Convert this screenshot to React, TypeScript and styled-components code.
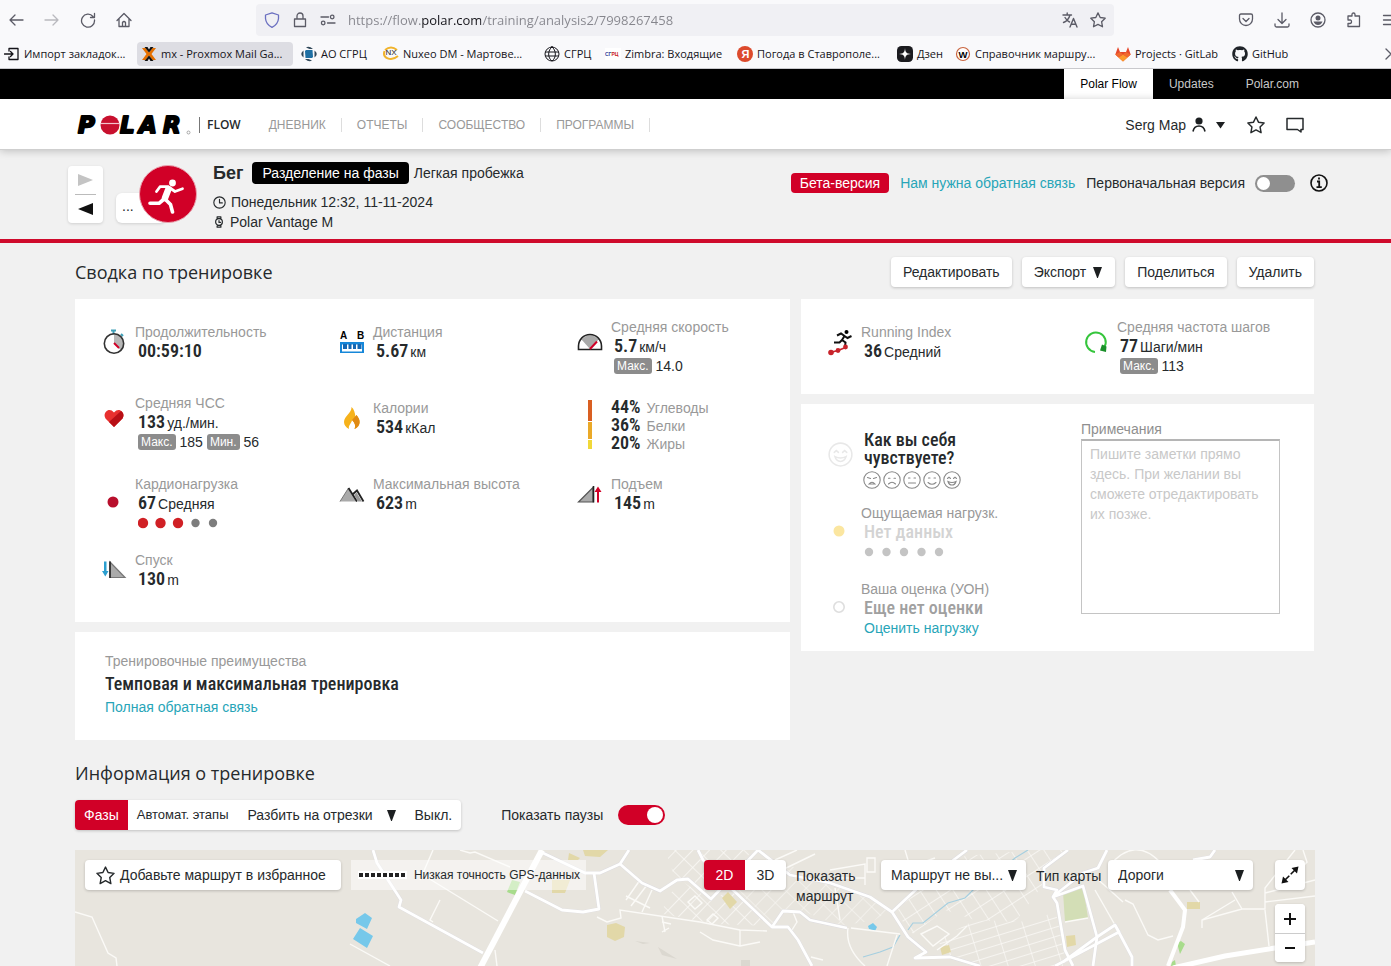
import React from "react";
import styled, { createGlobalStyle, css } from "styled-components";
import { FaGithub } from "react-icons/fa";

const GlobalStyle = createGlobalStyle`
  *, *::before, *::after { box-sizing: border-box; }
  html, body, #root { margin: 0; padding: 0; }
  body {
    background: #f1f1f1;
    color: #262a2c;
    font: 14px/20px "Liberation Sans", Arial, sans-serif;
  }
  button, input, select, textarea { font: inherit; color: inherit; }
  button { cursor: pointer; }
  a { color: #27a5b8; text-decoration: none; }
  svg { display: block; flex: none; }
`;

const red = "#d10027";
const uiFont = `"Open Sans", "Noto Sans", sans-serif`;
const condensed = `"Roboto Condensed", "Liberation Sans Narrow", Roboto, sans-serif`;

const Page = styled.div`
  display: flex;
  flex-direction: column;
  min-height: 100vh;
  overflow: hidden;
`;

/* ---------- browser window ---------- */

const Browser = styled.div`
  background: #f9f9fb;
  border-bottom: 1px solid #c9c9cd;
  color: #15141a;
  font-family: ${uiFont};
  overflow: hidden;
`;
const Toolbar = styled.div`
  display: flex;
  align-items: center;
  height: 40px;
`;
const ToolGroup = styled.div<{ $cut?: boolean }>`
  display: flex;
  gap: 4px;
  margin-right: ${(p) => (p.$cut ? "-15px" : "0")};
`;
const ToolButton = styled.button<{ $dim?: boolean }>`
  display: flex;
  align-items: center;
  justify-content: center;
  width: 32px;
  height: 32px;
  padding: 0;
  border: 0;
  background: none;
  color: ${(p) => (p.$dim ? "#b9b9be" : "#5b5b66")};
`;
const AddressBar = styled.div`
  display: flex;
  flex: 1;
  align-items: center;
  gap: 12px;
  height: 32px;
  margin: 0 116px;
  padding: 0 8px;
  border-radius: 4px;
  background: #f0f0f4;
  color: #5b5b66;
`;
const AddressInput = styled.input`
  flex: 1;
  min-width: 0;
  height: 28px;
  padding: 0;
  border: 0;
  outline: 0;
  font-size: 13px;
  color: transparent;
  background: linear-gradient(90deg, #85858c 73px, #15141a 73px 133px, #85858c 133px);
  background-clip: text;
  -webkit-background-clip: text;
`;
const BookmarksBar = styled.div`
  display: flex;
  align-items: center;
  gap: 4px;
  height: 28px;
  font-size: 11px;
`;
const Bookmark = styled.a<{ $width: number; $active?: boolean }>`
  display: flex;
  flex: 0 0 ${(p) => p.$width}px;
  align-items: center;
  gap: 4px;
  min-width: 0;
  height: 24px;
  padding: 0 4px;
  border-radius: 4px;
  background: ${(p) => (p.$active ? "#dddde3" : "transparent")};
  color: #15141a;
  white-space: nowrap;
`;
const More = styled.span`
  margin-left: auto;
  margin-right: -8px;
  color: #5b5b66;
`;

/* ---------- site header ---------- */

const SiteBar = styled.div`
  display: flex;
  justify-content: flex-end;
  padding: 0 76px;
  background: #000;
`;
const SiteTab = styled.a<{ $active?: boolean }>`
  padding: 0 16px;
  font-size: 12px;
  line-height: 30px;
  color: ${(p) => (p.$active ? "#000" : "#c9c9c9")};
  background: ${(p) => (p.$active ? "#fff" : "transparent")};
`;
const NavBar = styled.nav`
  position: relative;
  display: flex;
  align-items: center;
  height: 51px;
  padding: 1px 87px 0 76px;
  background: #fff;
  border-bottom: 1px solid #cfcfcf;
  box-shadow: 0 1px 8px rgba(0, 0, 0, 0.22);
`;
const LogoLink = styled.a`
  display: flex;
  align-items: center;
  color: #262a2c;
`;
const FlowWord = styled.span`
  margin-left: 8px;
  padding-left: 7px;
  border-left: 1px solid #777;
  font: 600 12px/16px ${uiFont};
`;
const NavItems = styled.div`
  display: flex;
  align-items: center;
  margin-left: 13px;
`;
const NavItem = styled.a`
  padding: 0 15px;
  border-right: 1px solid #ddd;
  font-size: 12px;
  line-height: 14px;
  color: #999;
`;
const UserArea = styled.div`
  display: flex;
  align-items: center;
  gap: 21px;
  margin-left: auto;
`;
const PlainButton = styled.button`
  display: flex;
  align-items: center;
  gap: 6px;
  padding: 0;
  border: 0;
  background: none;
`;

/* ---------- training header ---------- */

const TrainingHeader = styled.header`
  display: flex;
  align-items: flex-start;
  height: 93px;
  padding: 12px 62px 0 68px;
  border-bottom: 4px solid #cf0a2c;
`;
const Pager = styled.div`
  display: flex;
  flex-direction: column;
  width: 35px;
  margin-top: 4px;
  padding: 0 7px;
  border-radius: 4px;
  background: #fff;
  box-shadow: 0 1px 3px rgba(0, 0, 0, 0.14);
`;
const PagerButton = styled.button`
  display: flex;
  align-items: center;
  justify-content: center;
  height: 28px;
  padding: 0;
  border: 0;
  background: none;
  & + & { border-top: 1px solid #bbb; height: 29px; }
`;
const SportBadge = styled.div`
  display: flex;
  align-items: flex-end;
  margin: 3px 0 0 13px;
`;
const Dots = styled.button`
  width: 50px;
  height: 30px;
  margin-right: -27px;
  padding: 0 0 4px 6px;
  border: 0;
  border-radius: 6px;
  background: #fff;
  box-shadow: 0 1px 3px rgba(0, 0, 0, 0.14);
  text-align: left;
`;
const SportCircle = styled.div`
  z-index: 1;
  display: flex;
  align-items: center;
  justify-content: center;
  width: 58px;
  height: 58px;
  border: 1px solid #e9a3af;
  border-radius: 50%;
  background: ${red};
  color: #fff;
`;
const SessionInfo = styled.div`
  margin-left: 16px;
`;
const InfoLine = styled.div`
  display: flex;
  align-items: center;
  gap: 5px;
  height: 20px;
  white-space: nowrap;
`;
const TitleLine = styled(InfoLine)`
  height: 22px;
  margin-bottom: 8px;
`;
const Sport = styled.h1`
  margin: 0 4px 0 0;
  font-size: 18px;
  font-weight: 700;
  line-height: 20px;
`;
const PhaseTag = styled.span`
  padding: 0 10px;
  border-radius: 4px;
  background: #000;
  color: #fff;
  line-height: 22px;
`;
const VersionArea = styled.div`
  display: flex;
  align-items: center;
  gap: 11px;
  height: 20px;
  margin: 11px 0 0 auto;
  white-space: nowrap;
`;
const Beta = styled.span`
  padding: 0 9px;
  border-radius: 4px;
  background: ${red};
  color: #fff;
`;
const Switch = styled.input<{ $w: number; $h: number }>`
  position: relative;
  flex: none;
  appearance: none;
  width: ${(p) => p.$w}px;
  height: ${(p) => p.$h}px;
  margin: 0;
  border-radius: 12px;
  background: #8f8f8f;
  &::before {
    content: "";
    position: absolute;
    top: 2px;
    left: 2px;
    width: ${(p) => p.$h - 4}px;
    height: ${(p) => p.$h - 4}px;
    border-radius: 50%;
    background: #fff;
  }
  &:checked { background: ${red}; }
  &:checked::before { left: auto; right: 2px; }
`;
const SwitchLabel = styled.label<{ $gap: number }>`
  display: flex;
  align-items: center;
  gap: ${(p) => p.$gap}px;
`;
const InfoButton = styled(PlainButton)`
  margin-left: 3px;
`;

/* ---------- body ---------- */

const Main = styled.main`
  display: flex;
  flex: 1;
  flex-direction: column;
  padding: 14px 77px 0 75px;
`;
const HeadingRow = styled.div`
  display: flex;
  align-items: center;
  justify-content: space-between;
  height: 30px;
  margin-bottom: 12px;
`;
const Heading = styled.h2`
  margin: 0;
  font: 400 18px/24px ${uiFont};
`;
const Actions = styled.div`
  display: flex;
  gap: 10px;
`;
const raised = css`
  border: 0;
  border-radius: 4px;
  background: #fff;
  box-shadow: 0 1px 3px rgba(0, 0, 0, 0.2);
`;
const ActionButton = styled.button`
  ${raised}
  display: flex;
  align-items: center;
  gap: 6px;
  height: 30px;
  padding: 0 12px;
  white-space: nowrap;
`;
const Columns = styled.div`
  display: grid;
  grid-template-columns: 715fr 513fr;
  gap: 11px;
  align-items: start;
`;
const Column = styled.div`
  display: grid;
  gap: 10px;
`;
const Card = styled.section`
  background: #fff;
`;
const StatsCard = styled(Card)`
  display: grid;
  grid-template-columns: 238fr 238fr 215fr;
  grid-auto-rows: 76px;
  padding: 13px 0 6px 24px;
`;
const SideCard = styled(Card)`
  display: grid;
  grid-template-columns: 256fr 233fr;
  padding: 13px 0 6px 24px;
`;
const BenefitCard = styled(Card)`
  padding: 19px 30px 23px;
`;
const FeelingList = styled.div`
  display: grid;
  grid-auto-rows: 76px;
`;
const Stat = styled.div`
  display: flex;
  gap: 6px;
  height: 76px;
`;
const StatIcon = styled.div<{ $tall?: boolean }>`
  display: flex;
  flex: none;
  align-items: center;
  justify-content: center;
  width: 30px;
  height: ${(p) => (p.$tall ? 74 : 60)}px;
`;
const StatText = styled.div<{ $raised?: boolean }>`
  padding-top: ${(p) => (p.$raised ? 5 : 10)}px;
  white-space: nowrap;
`;
const StatLabel = styled.div`
  color: #999;
`;
const StatValue = styled.div<{ $color?: string }>`
  display: flex;
  align-items: baseline;
  gap: 2px;
  height: 19px;
  padding-left: 3px;
  line-height: 17px;
  color: ${(p) => p.$color || "inherit"};
`;
const Figure = styled.span`
  font-family: ${condensed};
  font-size: 18px;
  font-weight: 500;
`;
const Amount = styled(Figure)`
  font-weight: 600;
`;
const StatExtra = styled.div`
  display: flex;
  align-items: center;
  gap: 4px;
  height: 20px;
  padding-left: 3px;
`;
const Tag = styled.span`
  padding: 0 3px;
  border-radius: 3px;
  background: #8c8c8c;
  color: #fff;
  font-size: 12px;
  line-height: 16px;
`;
const Nutrient = styled.div`
  display: flex;
  align-items: baseline;
  gap: 6px;
  height: 18px;
  line-height: 18px;
  color: #999;
  ${Amount} { color: #262a2c; }
`;
const Question = styled.div`
  padding: 4px 0 4px 3px;
  font: 500 18px/18px ${condensed};
`;
const FaceRow = styled.div`
  display: flex;
  gap: 2px;
  padding-left: 2px;
`;
const FaceButton = styled.button`
  padding: 0;
  border: 0;
  background: none;
`;
const Notes = styled.div`
  width: 199px;
  padding-top: 2px;
`;
const NotesLabel = styled.label`
  display: block;
  color: #8f8f8f;
`;
const NotesBox = styled.textarea`
  display: block;
  width: 100%;
  height: 175px;
  padding: 3px 6px 3px 8px;
  border: 1px solid #c4c4c4;
  border-top: 2px solid #b5b5b5;
  background: #fff;
  line-height: 20px;
  resize: none;
  overflow: hidden;
  &::placeholder { color: #c8c8c8; opacity: 1; }
`;
const BenefitTitle = styled.div`
  font: 500 18px/26px ${condensed};
`;
const InfoHeading = styled(Heading)`
  margin: 21px 0 15px;
`;
const Controls = styled.div`
  display: flex;
  align-items: center;
  gap: 40px;
  margin-bottom: 20px;
`;
const Segments = styled.div`
  ${raised}
  display: flex;
  height: 30px;
  overflow: hidden;
`;
const Segment = styled.button<{ $active?: boolean; $small?: boolean }>`
  min-width: 41px;
  padding: 0 9px;
  border: 0;
  background: ${(p) => (p.$active ? red : "transparent")};
  color: ${(p) => (p.$active ? "#fff" : "inherit")};
  font-size: ${(p) => (p.$small ? 13 : 14)}px;
  white-space: nowrap;
`;
const Picker = styled.div<{ $w: number; $raised?: boolean }>`
  position: relative;
  display: flex;
  align-items: center;
  width: ${(p) => p.$w}px;
  height: 30px;
  ${(p) => p.$raised && raised}
  select {
    width: 100%;
    height: 30px;
    padding: 0 0 0 10px;
    border: 0;
    background: none;
    appearance: none;
  }
  svg { position: absolute; right: 9px; pointer-events: none; }
`;

/* ---------- map ---------- */

const MapArea = styled.section`
  position: relative;
  flex: 1;
  min-height: 116px;
  margin-right: -1px;
  overflow: hidden;
  background: #e8e5de;
`;
const MapCanvas = styled.svg`
  position: absolute;
  inset: 0;
  width: 100%;
  height: 100%;
`;
const MapControls = styled.div`
  position: relative;
  display: flex;
  align-items: flex-start;
  gap: 10px;
  padding: 10px 10px 0;
`;
const MapButton = styled.button`
  ${raised}
  display: flex;
  align-items: center;
  gap: 5px;
  height: 30px;
  padding: 0 15px 0 11px;
  white-space: nowrap;
`;
const Legend = styled.div`
  display: flex;
  align-items: center;
  gap: 7px;
  height: 30px;
  padding: 0 6px 0 7px;
  background: rgba(255, 255, 255, 0.5);
  font-size: 12px;
  white-space: nowrap;
`;
const MapRight = styled.div`
  display: flex;
  align-items: flex-start;
  gap: 10px;
  margin-left: auto;
`;
const MapLabel = styled.label<{ $w: number }>`
  width: ${(p) => p.$w}px;
  padding-top: 6px;
`;
const MapPair = styled.div`
  display: flex;
`;
const SquareButtons = styled.div`
  display: grid;
  gap: 14px;
  margin-left: 12px;
`;
const SquareButton = styled.button`
  ${raised}
  display: flex;
  align-items: center;
  justify-content: center;
  width: 30px;
  height: 30px;
  padding: 0;
`;
const ZoomBox = styled.div`
  ${raised}
  button { box-shadow: none; height: 29px; }
  button + button { border-top: 1px solid #ccc; border-radius: 0 0 4px 4px; }
`;

/* ---------- drawings ---------- */

const Line = ({ d, size = 16, w = 1.3, fill = "none", box = 16 }: { d: string; size?: number; w?: number; fill?: string; box?: number }) => (
  <svg width={size} height={size} viewBox={`0 0 ${box} ${box}`} fill={fill} stroke="currentColor" strokeWidth={w} strokeLinecap="round" strokeLinejoin="round">
    <path d={d} />
  </svg>
);

const starPath = "M8 .9 10.2 5.5 15.2 6.2 11.6 9.7 12.5 14.8 8 12.4 3.5 14.8 4.4 9.7.8 6.2 5.8 5.5Z";

const Caret = ({ w = 9, h = 11 }) => (
  <svg width={w} height={h} viewBox="0 0 9 11"><path d="M0 0H9L4.900 11H4.100Z" fill="#1c1f21" /></svg>
);

const Shield = () => (
  <svg width="16" height="16" viewBox="0 0 16 16" fill="none" stroke="#6a6fc0" strokeWidth="1.300" strokeLinejoin="round">
    <path d="M8 .8 14.500 3V6.500Q14 12.500 8 15.300 2 12.500 1.500 6.500V3Z" />
  </svg>
);

const Logo = () => (
  <svg width="115" height="34" viewBox="0 -6 115 34" fontFamily="DejaVu Sans" fontWeight="700" fontStyle="oblique" fontSize="23" stroke="#000" strokeWidth="2" strokeLinejoin="round">
    <text x="2" y="19">P</text>
    <text x="44" y="19">L</text>
    <text x="63" y="19">A</text>
    <text x="87" y="19">R</text>
    <circle cx="34" cy="11" r="9.500" fill="#c8102e" stroke="none" />
    <path d="M25 9.500H43.500" stroke="#f3c3cb" strokeWidth="1.200" />
    <circle cx="112.500" cy="18.500" r="1.500" fill="none" stroke="#888" strokeWidth=".7" />
  </svg>
);

const Runner = () => (
  <svg width="40" height="40" viewBox="0 0 40 40" fill="none" stroke="#fff" strokeLinecap="round" strokeLinejoin="round">
    <circle cx="24.500" cy="9" r="3.400" fill="#fff" stroke="none" />
    <path d="M20.500 15 17 24" strokeWidth="6.500" />
    <path d="M8.500 17.500 12 12.700H20M22 14 27 17.500 34.500 14.800" strokeWidth="2.800" />
    <path d="M17 25 22.500 30.500 24.500 38M15.500 25.500 11 29.300H2" strokeWidth="3.600" />
  </svg>
);

const faces = [
  "M4.500 6.500 7.500 7.500M10.500 7.500 13.500 6.500M6 13Q9 9.500 12 13Z",
  "M5.500 7.200h1.500M11 7.200h1.500M5.500 13Q9 9.500 12.500 13",
  "M5.500 7h1.500M11 7h1.500M5.500 12h7",
  "M5.500 7h1.500M11 7h1.500M5 11.500Q9 15 13 11.500",
  "M4.500 7.500 6 6.200 7.500 7.500M10.500 7.500 12 6.200 13.500 7.500M5 10.500Q9 12.500 13 10.500 12 14 9 14T5 10.500Z",
];
const Face = ({ i, size = 18, color = "#888" }: { i: number; size?: number; color?: string }) => (
  <svg width={size} height={size} viewBox="0 0 18 18" fill="none" stroke={color} strokeWidth="1.100" strokeLinecap="round">
    <circle cx="9" cy="9" r="8.200" />
    <path d={faces[i]} />
  </svg>
);

const Meter = ({ on, color, off }: { on: number; color: string; off: string }) => (
  <svg width="82" height="12" viewBox="0 0 82 12">
    {[0, 1, 2, 3, 4].map((i) => (
      <circle key={i} cx={5 + i * 17.5} cy="6" r={i < on ? 5.2 : 4.2} fill={i < on ? color : off} />
    ))}
  </svg>
);

const Stopwatch = () => (
  <svg width="26" height="28" viewBox="0 0 26 28">
    <path d="M10 2.500h5M12.500 2.500v4M20 6l2 2" stroke="#3f9fb8" strokeWidth="2" />
    <path d="M13 15.500V5.500a10 10 0 0 1 7 17Z" fill="#b7b7b7" />
    <circle cx="13" cy="15.500" r="9.700" fill="none" stroke="#333" strokeWidth="1.600" />
    <path d="M13 15 18 20" stroke={red} strokeWidth="2" />
  </svg>
);
const Distance = () => (
  <svg width="26" height="28" viewBox="0 0 26 28">
    <text x="1" y="11" fontFamily="Liberation Sans" fontWeight="700" fontSize="10">A</text>
    <text x="18" y="11" fontFamily="Liberation Sans" fontWeight="700" fontSize="10">B</text>
    <path d="M1 14H25V25H1Z" fill="#1687d9" />
    <path d="M3 16.500H23V23.500H3Z" fill="#fff" />
    <path d="M4 16h4v5H4ZM9.500 16h3v5h-3ZM14 16h3v5h-3ZM18.500 16h4v5h-4Z" fill="#1668b4" />
  </svg>
);
const Speed = () => (
  <svg width="26" height="18" viewBox="0 0 26 18">
    <path d="M13 16 4.500 6.500Q13-2 21.500 6.500Z" fill="#aaa" />
    <path d="M1.500 16.500V13A11.500 11.500 0 0 1 24.500 13V16.500Z" fill="none" stroke="#222" strokeWidth="1.600" />
    <path d="M13 16 20 8.500" stroke={red} strokeWidth="2" />
  </svg>
);
const Heart = () => (
  <svg width="20" height="20" viewBox="0 0 20 20">
    <path d="M10 19 1.500 10.500C-2 5 5-2 10 4.500 15-2 22 5 18.500 10.500Z" fill="#e8302f" />
    <path d="M18.500 10.500 10 19 5 14 17 3C20 5 20 8 18.500 10.500Z" fill="#b80f16" />
  </svg>
);
const Flame = () => (
  <svg width="18" height="24" viewBox="0 0 18 24">
    <path d="M8.500 1C9 7 1 10 1 16c0 3 2 5.500 5 7-1-4 3-6 3-9 3 3 4 6 2.500 9 3-1 5.500-4 5-8-.3-3-2-4-3-6l-1 2C12 7 11 3 8.500 1Z" fill="#f6b21b" />
    <path d="M13.500 9C18 14 18 20 11.500 23 13 20 12 17 9 14Z" fill="#e08a13" />
  </svg>
);
const Macro = () => (
  <svg width="6" height="50" viewBox="0 0 6 50">
    <path d="M1 0H5V21H1Z" fill="#d95f22" /><path d="M1 22H5V39H1Z" fill="#eaa928" /><path d="M1 40H5V49H1Z" fill="#f0d83a" />
  </svg>
);
const LowDot = ({ fill, stroke }: { fill: string; stroke?: string }) => (
  <svg width="28" height="32" viewBox="0 0 28 32"><circle cx="13" cy="24" r={stroke ? 5.2 : 5.5} fill={fill} stroke={stroke} strokeWidth="1.600" /></svg>
);
const Mountains = () => (
  <svg width="26" height="18" viewBox="0 0 26 18">
    <path d="M1 16.500 9.500 3 18 16.500Z" fill="#aaa" />
    <path d="M1 16.500 9.500 3" stroke="#777" />
    <path d="M9.500 3 18 16.500M14 9 18 5.500 24.500 16.500" fill="none" stroke="#222" strokeWidth="1.800" />
    <path d="M15 10 17.500 7.500 23 16.500H19Z" fill="#999" />
  </svg>
);
const Ascent = () => (
  <svg width="26" height="18" viewBox="0 0 26 18">
    <path d="M1.500 17 16 2.500V17Z" fill="#aaa" stroke="#555" strokeWidth="1.200" />
    <path d="M16.500 1V17.500" stroke="#222" strokeWidth="1.600" />
    <path d="M20 17.500V7H17.500L21 1.500 24.500 7H22V17.500Z" fill={red} />
  </svg>
);
const Descent = () => (
  <svg width="26" height="20" viewBox="0 0 26 20">
    <path d="M9 2 24 17.500H9Z" fill="#aaa" stroke="#777" strokeWidth="1.200" />
    <path d="M9 1.500V18" stroke="#222" strokeWidth="1.600" />
    <path d="M3 1.500H5.500V11H7.500L4.300 16.500 1 11H3Z" fill="#2c9fd0" />
  </svg>
);
const RunIndex = () => (
  <svg width="26" height="28" viewBox="0 0 26 28">
    <circle cx="19.500" cy="4" r="2" />
    <path d="M10 7.500 14 5.500 17.500 8 15 12 18.500 14.500 18 19M17.500 8 20.500 10 24.500 8M15 12 12.500 14.500H7" fill="none" stroke="#111" strokeWidth="2" />
    <path d="M3 24.500 11 22.500 18.500 19.500" fill="none" stroke="#c8232b" strokeWidth="1.800" />
    <circle cx="4" cy="24.500" r="2.800" fill="#c8232b" /><circle cx="11" cy="22.500" r="2.400" fill="#c8232b" /><circle cx="18.500" cy="19" r="2.400" fill="#c8232b" />
  </svg>
);
const Cadence = () => (
  <svg width="24" height="26" viewBox="0 0 24 26">
    <path d="M11 23A9.800 9.800 0 1 1 20.500 18" fill="none" stroke="#35c53c" strokeWidth="2" />
    <path d="M18 15.500 22.500 17.500 22 23 16 21.500Z" fill="#1a8f2a" />
  </svg>
);

const thickRoads = [
  "M298 0 302 13 326 50 324 57 408 103",
  "M468 3 510 23H525L545 14 554 0",
  "M519 23 524 59 508 62 487 60 450 41",
  "M545 14 567 33 585 41 602 30 613 29 636 49 683 0",
  "M623 0 628 10 658 40 697 77H713L723 90 737 116",
  "M697 77 708 61 725 62 735 70 772 78",
  "M683 0 715 25 755 33 795 47 817 62 833 87 851 102 840 108 875 107 905 116",
  "M817 62 848 33 892 0",
  "M993 0 969 18V37L982 40 978 47 982 53 990 100 998 116",
  "M1032 0 1023 18 1008 23 980 45M978 47 1008 36 1022 87 1018 116",
  "M988 112 1022 87 1040 75 1057 107V116M1040 75 1044 82 980 116",
  "M1140 0 1135 7 1118 10",
];
const thinRoads = [
  "M0 62 17 67 33 103 41 108 42 116M358 0 345 30M340 20 423 71M385 0 395 3 400 2 435 17",
  "M365 50 355 70 358 72M275 94 315 116M420 100 422 116",
  "M522 67 532 72 546 68 545 60 625 72 665 80 692 81M587 66 590 82M587 82 594 78M587 72 596 74",
  "M625 82 638 90 665 96 685 92M665 80V96M551 50 565 30M556 56 572 35M551 46 575 58M567 62 577 40",
  "M773 78Q770 98 790 116M776 78 825 84M822 85 812 116M736 107 748 110M760 38 765 70M718 62 722 72 717 80",
  "M1127 78V70L1167 59H1190V38L1220 0M1190 52 1240 46M1190 43 1240 30M1190 60 1194 96M1167 59 1157 42M1127 70 1160 50M1115 40 1124 52",
  "M1050 50 1058 54 1073 85 1083 90 1098 86M1020 40 1040 75M1018 25 1048 52M1035 15Q1060-14 1085 12M1085 12 1120 30M990 72 1013 68",
  "M1133 32 1166 12M1228 0 1232 12 1212 34M755 20 790 14V35M700 10 722 0M707 20 740 4M760 28H790M792 8h8v14h-8ZM810 10V34M830 0 836 20M820 22 860 8",
  "M846 84 862 76 874 84 858 96ZM862 100 882 86 892 76M613 52 620 46 627 53 620 59ZM632 70 638 64 643 68 637 74Z",
];

const RoadMap = () => (
  <MapCanvas viewBox="0 0 1240 116" preserveAspectRatio="xMidYMin slice" aria-hidden="true">
    <defs>
      <pattern id="blocks" width="16" height="12" patternUnits="userSpaceOnUse" patternTransform="rotate(-46)">
        <path d="M0 0H16M0 0V12" stroke="#fbfaf7" strokeWidth="1.400" fill="none" />
      </pattern>
      <pattern id="rows" width="26" height="9" patternUnits="userSpaceOnUse" patternTransform="rotate(-17)">
        <path d="M0 0H26M0 0V9" stroke="#fbfaf7" strokeWidth="1.400" fill="none" />
      </pattern>
      <pattern id="fine" width="14" height="15" patternUnits="userSpaceOnUse" patternTransform="rotate(-33)">
        <path d="M0 0H14M0 0V15" stroke="#fbfaf7" strokeWidth="1.400" fill="none" />
      </pattern>
    </defs>
    <path d="M590 0H678L636 47 613 28 600 28ZM590 48 608 32 636 50 656 40 694 76 640 74 588 64Z" fill="url(#blocks)" />
    <path d="M690 5 750 30 795 47 815 60 800 70 765 76 725 60 708 60 698 74 662 40Z" fill="url(#blocks)" opacity=".7" />
    <path d="M820 62 850 34 890 6 960 0 990 0 968 18 967 36 940 72 900 70 870 60 838 84Z" fill="url(#fine)" />
    <path d="M862 90 900 70 960 72 980 60 990 100 994 116 906 116 872 104Z" fill="url(#rows)" />
    <g fill="#e2d8a8">
      <path d="M532 75 541 73 550 77 549 87 540 91 532 87ZM508 0H533L525 7 510 6ZM494 3 505 8 503 10 493 10ZM477 30H495L490 43 477 43ZM647 48 653 42 662 52 655 59Z" />
      <path d="M1112 52h13v7h-13ZM991 86 1000 85 1001 95 992 97ZM865 97 874 95 876 102 867 105Z" />
    </g>
    <path d="M988 42 1008 36 1013 68 990 72Z" fill="#d3deb6" />
    <path d="M432 42 437 30 445 32 440 45ZM1102 93 1106 91 1110 94 1105 104ZM1097 112 1100 110 1101 116H1096Z" fill="#a8dc8c" />
    <path d="M560 91 575 93 568 94ZM583 97 602 109 587 105ZM666 110h9v6h-9Z" fill="#dbd8d0" />
    <path d="M281 69 290 63 297 68 292 79 281 73ZM285 78 298 86 292 98 278 89ZM793 76 798 73 802 77 800 81 794 79Z" fill="#76c8ea" />
    <path d="M953 0 940 8 920 26 898 40 890 48 873 53 848 73H838L833 80M825 85 818 97 805 102 788 107" fill="none" stroke="#a5cfe0" strokeWidth="1.200" />
    <g fill="none" stroke="#fbfaf7" strokeWidth="1.400">{thinRoads.map((d) => <path key={d} d={d} />)}</g>
    <g fill="none" stroke="#dddce0" strokeWidth="3.600" strokeLinejoin="round">{thickRoads.map((d) => <path key={d} d={d} />)}</g>
    <g fill="none" stroke="#fff" strokeWidth="2.800" strokeLinejoin="round">{thickRoads.map((d) => <path key={d} d={d} />)}</g>
    <g fill="none" stroke="#fff">
      <path d="M467 0 403 122" strokeWidth="6" />
      <path d="M1095 40 1110 60 1108 77 1093 116" strokeWidth="4" />
      <path d="M1098 118 1150 106 1200 98 1240 92" strokeWidth="5" />
    </g>
  </MapCanvas>
);

/* ---------- bookmarks ---------- */

const bookmarks: { text: string; width: number; active?: boolean; icon: React.ReactNode }[] = [
  { text: "Импорт закладок...", width: 133, icon: <Line d="M5 5V2.500H14V13.500H5V11M.5 8H9M6.500 5.500 9 8 6.500 10.500" /> },
  { text: "mx - Proxmox Mail Ga...", width: 156, active: true, icon: (
    <svg width="16" height="16" viewBox="0 0 16 16"><path d="M1 2H4.500L8 6.500 11.500 2H15L10.500 8 15 14H11.500L8 9.500 4.500 14H1L5.500 8Z" fill="#e57000" /><path d="M3.500 1H6.500L8 3.500 9.500 1H12.500L8 6.500ZM3.500 15H6.500L8 12.500 9.500 15H12.500L8 9.500Z" fill="#111" /></svg>) },
  { text: "АО СГРЦ", width: 78, icon: (
    <svg width="16" height="16" viewBox="0 0 16 16"><path d="M5 4H11.500L12 11 11 12H4.500L4 5Z" fill="#1e6fa3" /><path d="M5 1.500Q8-.5 12 3L8.500 3ZM13.500 4.500Q18 8 13.500 11.500V8ZM11 14.500Q8 16.500 4 13H7.500ZM2.500 11.500Q-2 8 2.500 4.500V8Z" fill="#31485a" /></svg>) },
  { text: "Nuxeo DM - Мартове...", width: 157, icon: (
    <svg width="16" height="16" viewBox="0 0 16 16"><path d="M1.500 5C-1 12 8 16 15 10M2 4Q8-1 14 4" fill="none" stroke="#f0b32c" strokeWidth="2" /><text x="2.500" y="9" fontFamily="Liberation Sans" fontSize="8" fill="#222">NX</text></svg>) },
  { text: "СГРЦ", width: 57, icon: <Line d="M8 1A7 7 0 1 1 8 15 7 7 0 1 1 8 1ZM8 1C3.500 4 3.500 12 8 15 12.500 12 12.500 4 8 1ZM1.500 6H14.500M1.500 10H14.500" w={1} /> },
  { text: "Zimbra: Входящие", width: 128, icon: (
    <svg width="16" height="16" viewBox="0 0 16 16"><path d="M0 2H16V14H0Z" fill="#fff" /><text x="0" y="10" fontFamily="Liberation Sans" fontWeight="700" fontSize="5" fill="#33419b">СГ<tspan fill="#c22">РЦ</tspan></text></svg>) },
  { text: "Погода в Ставрополе...", width: 156, icon: (
    <svg width="16" height="16" viewBox="0 0 16 16"><circle cx="8" cy="8" r="8" fill="#dc4a2c" /><text x="4.500" y="12" fontFamily="Liberation Sans" fontWeight="700" fontSize="11" fill="#fff">Я</text></svg>) },
  { text: "Дзен", width: 54, icon: (
    <svg width="16" height="16" viewBox="0 0 16 16"><rect width="16" height="16" rx="4.500" fill="#1b1b1f" /><path d="M8 2C8.300 6.500 9.500 7.700 14 8 9.500 8.300 8.300 9.500 8 14 7.700 9.500 6.500 8.300 2 8 6.500 7.700 7.700 6.500 8 2Z" fill="#fff" /></svg>) },
  { text: "Справочник маршру...", width: 156, icon: (
    <svg width="16" height="16" viewBox="0 0 16 16"><circle cx="8" cy="8" r="6.500" fill="#fff" stroke="#c9643f" strokeWidth="1.200" /><text x="3.500" y="11.500" fontFamily="Liberation Sans" fontWeight="700" fontSize="9.500">W</text></svg>) },
  { text: "Projects · GitLab", width: 113, icon: (
    <svg width="16" height="16" viewBox="0 0 16 16"><path d="M3 1 5 6H11L13 1 15.700 8.500 8 15.500.3 8.500Z" fill="#e5482c" /><path d="M8 15.500 3.500 11.500 8 8.500 12.500 11.500Z" fill="#fb9a2e" /><path d="M.3 8.500 5 6 8 8.500 3.500 11.500ZM15.700 8.500 11 6 8 8.500 12.500 11.500Z" fill="#f06a2f" /></svg>) },
  { text: "GitHub", width: 68, icon: <FaGithub size={16} color="#1f2328" /> },
];

const StatCell = ({ icon, label, value, unit, raisedText, children }: {
  icon: React.ReactNode; label: string; value: string; unit?: string; raisedText?: boolean; children?: React.ReactNode;
}) => (
  <Stat>
    <StatIcon>{icon}</StatIcon>
    <StatText $raised={raisedText}>
      <StatLabel>{label}</StatLabel>
      <StatValue><Amount>{value}</Amount>{unit && <span>{unit}</span>}</StatValue>
      {children && <StatExtra>{children}</StatExtra>}
    </StatText>
  </Stat>
);

export default function App() {
  return (
    <Page>
      <GlobalStyle />
      <Browser>
        <Toolbar>
          <ToolGroup>
            <ToolButton aria-label="Назад"><Line d="M7 3 2 8 7 13M2 8H15" /></ToolButton>
            <ToolButton aria-label="Вперёд" $dim><Line d="M9 3 14 8 9 13M14 8H1" /></ToolButton>
            <ToolButton aria-label="Обновить"><Line d="M13 4.500A6.500 6.500 0 1 0 14.500 8M14.500 1.500V5.500H10.500" /></ToolButton>
            <ToolButton aria-label="Домой"><Line d="M1 8.500 8 1.500 15 8.500M3 7V14.500H13V7M6.500 14.500V10.500Q8 8.500 9.500 10.500V14.500" /></ToolButton>
          </ToolGroup>
          <AddressBar>
            <Shield />
            <Line d="M2.500 7H13.500V14.500H2.500ZM5 7V4A3 3 0 0 1 11 4V7" />
            <Line d="M1 5H8.500M14 5A1.800 1.800 0 1 1 10.400 5 1.800 1.800 0 1 1 14 5ZM15 11H7.500M5 11A1.800 1.800 0 1 1 1.400 11 1.800 1.800 0 1 1 5 11Z" />
            <AddressInput aria-label="Адрес" defaultValue="https://flow.polar.com/training/analysis2/7998267458" />
            <Line d="M1 3H9.500M5.200 1V3M8 3Q6.500 8.500 1.500 10.500M3 5.500Q5 9 7.500 10M8 15 11.500 6.500 15 15M9.200 12.200H13.800" w={1.4} />
            <Line d={starPath} />
          </AddressBar>
          <ToolGroup $cut>
            <ToolButton aria-label="Pocket"><Line d="M3 2H13Q14.500 2 14.500 3.500V7A6.500 6.500 0 0 1 1.500 7V3.500Q1.500 2 3 2ZM5 6.500 8 9.500 11 6.500" /></ToolButton>
            <ToolButton aria-label="Загрузки"><Line d="M8 1V11M4 7.500 8 11.500 12 7.500M1 12V13.500Q1 15 2.500 15H13.500Q15 15 15 13.500V12" /></ToolButton>
            <ToolButton aria-label="Аккаунт">
              <svg width="16" height="16" viewBox="0 0 16 16"><circle cx="8" cy="8" r="7" fill="none" stroke="currentColor" strokeWidth="1.300" /><circle cx="8" cy="6" r="2.500" fill="currentColor" /><path d="M3.500 9.500H12.500Q11 13 8 13T3.500 9.500Z" fill="currentColor" /></svg>
            </ToolButton>
            <ToolButton aria-label="Расширения"><Line d="M6 4V2.500Q6 1 7.500 1T9 2.500V4H13.500V14.500H2V11.500H4Q5.500 11.500 5.500 9.700T4 8H2V4Z" /></ToolButton>
            <ToolButton aria-label="Меню"><Line d="M1.500 3.500H15M1.500 8H15M1.500 12.500H15" /></ToolButton>
          </ToolGroup>
        </Toolbar>
        <BookmarksBar>
          {bookmarks.map((b) => (
            <Bookmark key={b.text} href="#" $width={b.width} $active={b.active}>{b.icon}{b.text}</Bookmark>
          ))}
          <More><Line d="M3 3 8 8 3 13M9 3 14 8 9 13" /></More>
        </BookmarksBar>
      </Browser>

      <SiteBar>
        <SiteTab href="#" $active>Polar Flow</SiteTab>
        <SiteTab href="#">Updates</SiteTab>
        <SiteTab href="#">Polar.com</SiteTab>
      </SiteBar>
      <NavBar>
        <LogoLink href="#" aria-label="Polar Flow"><Logo /><FlowWord>FLOW</FlowWord></LogoLink>
        <NavItems>
          <NavItem href="#">ДНЕВНИК</NavItem>
          <NavItem href="#">ОТЧЕТЫ</NavItem>
          <NavItem href="#">СООБЩЕСТВО</NavItem>
          <NavItem href="#">ПРОГРАММЫ</NavItem>
        </NavItems>
        <UserArea>
          <PlainButton>
            Serg Map
            <svg width="14" height="15" viewBox="0 0 14 15"><circle cx="7" cy="4" r="3.600" fill="#1c1f21" /><path d="M1 14.500Q2 9 7 9T13 14.500" fill="none" stroke="#1c1f21" strokeWidth="1.600" /></svg>
            <svg width="14" height="8" viewBox="0 0 14 8"><path d="M4 1H13L8.500 7.500Z" fill="#1c1f21" /></svg>
          </PlainButton>
          <PlainButton aria-label="Избранное"><Line d={starPath} size={18} w={1.3} /></PlainButton>
          <PlainButton aria-label="Сообщения"><Line d="M1 2.500H17V13.500H15V16L11.500 13.500H1Z" size={18} box={18} w={1.5} /></PlainButton>
        </UserArea>
      </NavBar>

      <TrainingHeader>
        <Pager>
          <PagerButton aria-label="Следующая"><svg width="15" height="12"><path d="M0 0 15 6 0 12Z" fill="#c4c4c4" /></svg></PagerButton>
          <PagerButton aria-label="Предыдущая"><svg width="15" height="12"><path d="M15 0 0 6 15 12Z" fill="#111" /></svg></PagerButton>
        </Pager>
        <SportBadge>
          <Dots>...</Dots>
          <SportCircle><Runner /></SportCircle>
        </SportBadge>
        <SessionInfo>
          <TitleLine><Sport>Бег</Sport><PhaseTag>Разделение на фазы</PhaseTag>Легкая пробежка</TitleLine>
          <InfoLine><Line d="M8 1A7 7 0 1 1 8 15 7 7 0 1 1 8 1ZM8 4V8.500H11.500" size={13} w={1.4} />Понедельник 12:32, 11-11-2024</InfoLine>
          <InfoLine><Line d="M8 3.500A4.500 4.500 0 1 1 8 12.500 4.500 4.500 0 1 1 8 3.500ZM5.500 1H10.500V3H5.500ZM5.500 13H10.500V15H5.500ZM8 6V8.500H10" size={12} w={1.6} />Polar Vantage M</InfoLine>
        </SessionInfo>
        <VersionArea>
          <Beta>Бета-версия</Beta>
          <a href="#">Нам нужна обратная связь</a>
          <SwitchLabel $gap={10}>Первоначальная версия<Switch type="checkbox" $w={40} $h={17} /></SwitchLabel>
          <InfoButton aria-label="Информация">
            <svg width="20" height="20" viewBox="0 0 20 20" fill="none" stroke="#111" strokeWidth="1.600"><circle cx="10" cy="10" r="8" /><path d="M10 4.500V6.500M8 8.500H10.200V14M7.500 14.200H12.800" strokeWidth="1.800" /></svg>
          </InfoButton>
        </VersionArea>
      </TrainingHeader>

      <Main>
        <HeadingRow>
          <Heading>Сводка по тренировке</Heading>
          <Actions>
            <ActionButton>Редактировать</ActionButton>
            <ActionButton>Экспорт <Caret w={11} /></ActionButton>
            <ActionButton>Поделиться</ActionButton>
            <ActionButton>Удалить</ActionButton>
          </Actions>
        </HeadingRow>
        <Columns>
          <Column>
            <StatsCard>
              <StatCell icon={<Stopwatch />} label="Продолжительность" value="00:59:10" />
              <StatCell icon={<Distance />} label="Дистанция" value="5.67" unit="км" />
              <StatCell icon={<Speed />} label="Средняя скорость" value="5.7" unit="км/ч" raisedText><Tag>Макс.</Tag>14.0</StatCell>
              <StatCell icon={<Heart />} label="Средняя ЧСС" value="133" unit="уд./мин." raisedText><Tag>Макс.</Tag>185<Tag>Мин.</Tag>56</StatCell>
              <StatCell icon={<Flame />} label="Калории" value="534" unit="кКал" />
              <Stat>
                <StatIcon $tall><Macro /></StatIcon>
                <StatText>
                  <Nutrient><Amount>44%</Amount>Углеводы</Nutrient>
                  <Nutrient><Amount>36%</Amount>Белки</Nutrient>
                  <Nutrient><Amount>20%</Amount>Жиры</Nutrient>
                </StatText>
              </Stat>
              <StatCell icon={<LowDot fill="#b80f2c" />} label="Кардионагрузка" value="67" unit="Средняя"><Meter on={3} color="#d02025" off="#7d7d7d" /></StatCell>
              <StatCell icon={<Mountains />} label="Максимальная высота" value="623" unit="m" />
              <StatCell icon={<Ascent />} label="Подъем" value="145" unit="m" />
              <StatCell icon={<Descent />} label="Спуск" value="130" unit="m" />
            </StatsCard>
            <BenefitCard>
              <StatLabel>Тренировочные преимущества</StatLabel>
              <BenefitTitle>Темповая и максимальная тренировка</BenefitTitle>
              <a href="#">Полная обратная связь</a>
            </BenefitCard>
          </Column>
          <Column>
            <SideCard>
              <StatCell icon={<RunIndex />} label="Running Index" value="36" unit="Средний" />
              <StatCell icon={<Cadence />} label="Средняя частота шагов" value="77" unit="Шаги/мин" raisedText><Tag>Макс.</Tag>113</StatCell>
            </SideCard>
            <SideCard>
              <FeelingList>
                <Stat>
                  <StatIcon $tall><Face i={4} size={25} color="#e8e8e8" /></StatIcon>
                  <StatText>
                    <Question>Как вы себя<br />чувствуете?</Question>
                    <FaceRow>{faces.map((_, i) => <FaceButton key={i} aria-label={`Самочувствие ${i + 1}`}><Face i={i} /></FaceButton>)}</FaceRow>
                  </StatText>
                </Stat>
                <Stat>
                  <StatIcon><LowDot fill="#fbe6a0" /></StatIcon>
                  <StatText>
                    <StatLabel>Ощущаемая нагрузк.</StatLabel>
                    <StatValue $color="#d3d3d3"><Figure>Нет данных</Figure></StatValue>
                    <StatExtra><Meter on={0} color="" off="#c4c4c4" /></StatExtra>
                  </StatText>
                </Stat>
                <Stat>
                  <StatIcon><LowDot fill="none" stroke="#dedede" /></StatIcon>
                  <StatText>
                    <StatLabel>Ваша оценка (УОН)</StatLabel>
                    <StatValue $color="#a0a0a0"><Figure>Еще нет оценки</Figure></StatValue>
                    <StatExtra><a href="#">Оценить нагрузку</a></StatExtra>
                  </StatText>
                </Stat>
              </FeelingList>
              <Notes>
                <NotesLabel htmlFor="notes">Примечания</NotesLabel>
                <NotesBox id="notes" placeholder="Пишите заметки прямо здесь. При желании вы сможете отредактировать их позже." />
              </Notes>
            </SideCard>
          </Column>
        </Columns>

        <InfoHeading>Информация о тренировке</InfoHeading>
        <Controls>
          <Segments>
            <Segment $active>Фазы</Segment>
            <Segment $small>Автомат. этапы</Segment>
            <Picker $w={168}>
              <select aria-label="Разбить на отрезки"><option>Разбить на отрезки</option></select>
              <Caret />
            </Picker>
            <Segment>Выкл.</Segment>
          </Segments>
          <SwitchLabel $gap={15}>Показать паузы<Switch type="checkbox" defaultChecked $w={47} $h={20} /></SwitchLabel>
        </Controls>
        <MapArea>
          <RoadMap />
          <MapControls>
            <MapButton><Line d={starPath} size={19} w={1.2} />Добавьте маршрут в избранное</MapButton>
            <Legend>
              <svg width="49" height="8"><path d="M0 0H49V8H0Z" fill="#fff" /><path d="M1 4H49" stroke="#222" strokeWidth="4" strokeDasharray="4 2" /></svg>
              Низкая точность GPS-данных
            </Legend>
            <MapRight>
              <Segments><Segment $active>2D</Segment><Segment>3D</Segment></Segments>
              <MapLabel $w={75} htmlFor="route">Показать маршрут</MapLabel>
              <Picker $w={145} $raised><select id="route"><option>Маршрут не вы...</option></select><Caret /></Picker>
              <MapPair>
                <MapLabel $w={72} htmlFor="kind">Тип карты</MapLabel>
                <Picker $w={145} $raised><select id="kind"><option>Дороги</option></select><Caret /></Picker>
              </MapPair>
              <SquareButtons>
                <SquareButton aria-label="Развернуть"><svg width="18" height="18"><path d="M3 15 15 3" stroke="#111" strokeWidth="1.600" strokeDasharray="7.500 2" /><path d="M17.500.5 16 7.500 10.500 2ZM.5 17.500 2 10.500 7.500 16Z" fill="#111" /></svg></SquareButton>
                <ZoomBox>
                  <SquareButton aria-label="Приблизить"><svg width="12" height="12"><path d="M0 6H12M6 0V12" stroke="#111" strokeWidth="2" /></svg></SquareButton>
                  <SquareButton aria-label="Отдалить"><svg width="10" height="2"><path d="M0 1H10" stroke="#111" strokeWidth="2" /></svg></SquareButton>
                </ZoomBox>
              </SquareButtons>
            </MapRight>
          </MapControls>
        </MapArea>
      </Main>
    </Page>
  );
}
